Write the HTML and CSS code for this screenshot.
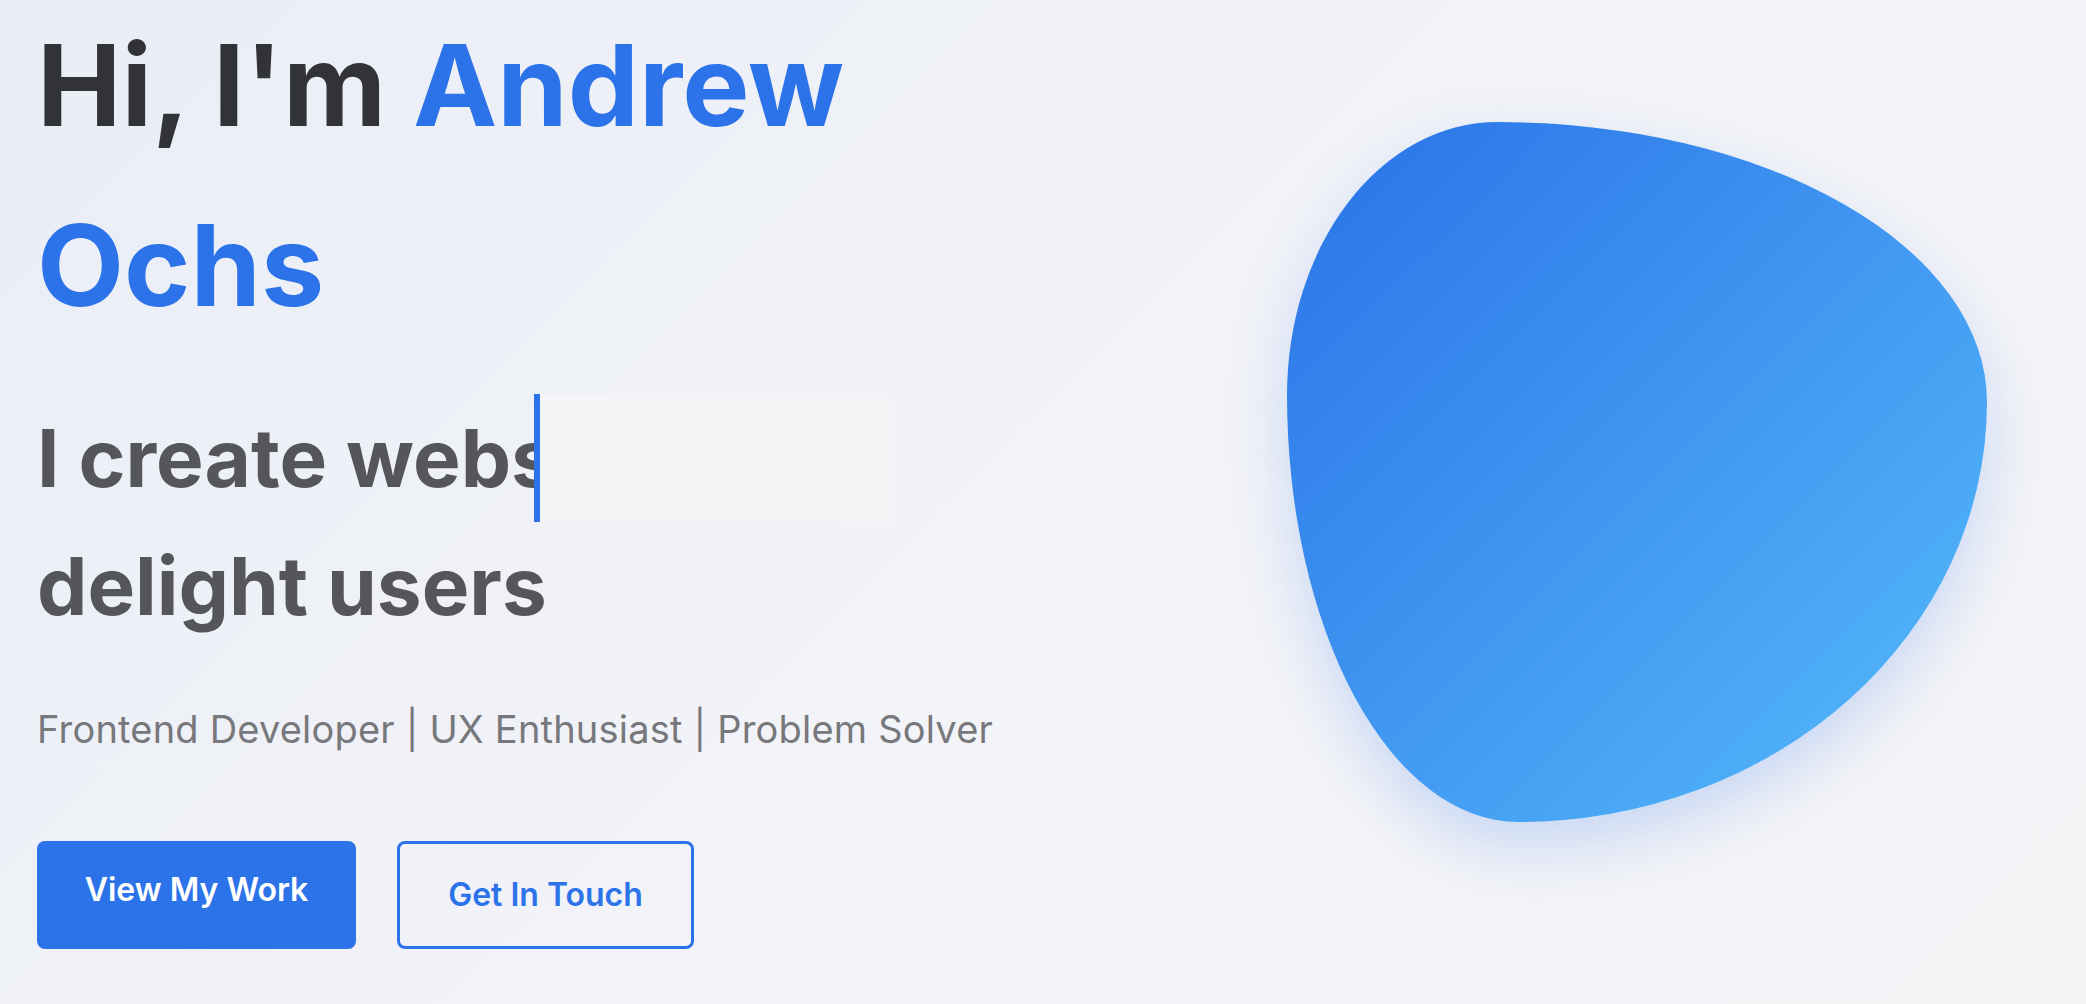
FILE: index.html
```html
<!DOCTYPE html>
<html lang="en">
<head>
<meta charset="utf-8">
<title>Andrew Ochs</title>
<link rel="stylesheet" href="styles.css">
</head>
<body>
<section class="hero">
  <div class="hero-content">
    <h1 class="hero-title">Hi, I'm <span class="accent">Andrew</span> <span class="accent">Ochs</span></h1>
    <h2 class="hero-typed">I create webs<span class="typed"></span><br>delight users</h2>
    <p class="hero-roles">Frontend Developer | UX Enthusiast | Problem Solver</p>
    <div class="hero-actions">
      <a class="btn btn-primary" href="#work">View My Work</a>
      <a class="btn btn-outline" href="#contact">Get In Touch</a>
    </div>
  </div>
  <div class="hero-visual">
    <div class="blob"></div>
  </div>
</section>
</body>
</html>
```
FILE: styles.css
```css
* { box-sizing: border-box; }
html, body { margin: 0; padding: 0; }
body {
  font-family: Inter, "Noto Sans", "Liberation Sans", sans-serif;
  line-height: 1.6;
  color: #323336;
  background: linear-gradient(135deg, #e9edf6 0%, #f3f4f8 55%, #f4f4f7 100%);
  min-height: 100vh;
  overflow: hidden;
}
.hero {
  height: 1004px;
  display: flex;
  align-items: center;
  justify-content: space-between;
  padding: 0 99px 60px 37px;
}
.hero-content {
  flex: 0 1 1010px;
  min-width: 0;
}
.hero-title {
  margin: 0 0 39px;
  font-size: 113px;
  font-weight: 700;
  line-height: 180px;
  color: #323336;
}
.accent { color: #2c73e9; }
.hero-typed {
  margin: 0 0 50px;
  font-size: 80px;
  font-weight: 700;
  line-height: 128px;
  color: #55565a;
}
.typed {
  display: inline-block;
  vertical-align: top;
  width: 358px;
  height: 128px;
  margin-left: -22px;
  background: #f4f4f6;
  border-left: 6px solid #2c73e9;
}
.hero-roles {
  margin: 0 0 82px;
  font-size: 38px;
  letter-spacing: 0.2px;
  line-height: 59px;
  color: #77787c;
  font-weight: 400;
}
.hero-actions {
  display: flex;
  gap: 41px;
}
.btn {
  display: inline-flex;
  align-items: center;
  justify-content: center;
  height: 108px;
  border-radius: 8px;
  font-size: 32px;
  font-weight: 600;
  text-decoration: none;
}
.btn-primary {
  width: 319px;
  padding-bottom: 10px;
  background: #2c73e9;
  color: #ffffff;
}
.btn-outline {
  width: 297px;
  border: 3px solid #2c73e9;
  color: #2c73e9;
  background: transparent;
}
.hero-visual {
  width: 700px;
  flex: none;
}
.blob {
  width: 700px;
  height: 700px;
  border-radius: 30% 70% 67% 33% / 39% 40% 60% 61%;
  background: linear-gradient(135deg, #2a72e8 0%, #56bcfa 100%);
  box-shadow: 0 26px 64px rgba(44, 115, 233, 0.22);
}
```
